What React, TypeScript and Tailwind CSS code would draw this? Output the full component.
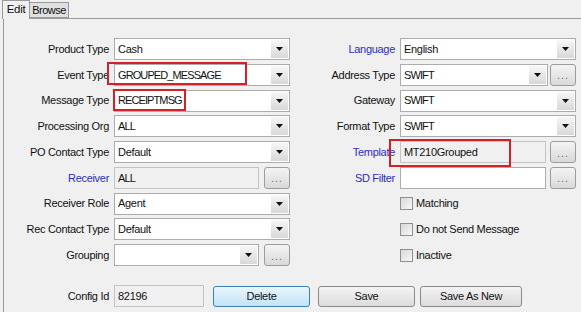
import React from 'react'

const font = { fontFamily: '"Liberation Sans", Arial, sans-serif' }

function Arrow() {
  return (
    <div className="flex h-full w-[17px] items-center justify-center bg-gradient-to-b from-[#f7f7f7] to-[#d8d8d8]">
      <svg width="7" height="4" viewBox="0 0 7 4">
        <path d="M0 0h7L3.5 4z" fill="#111" />
      </svg>
    </div>
  )
}

function Combo({ value, caps = false, className = '' }: { value: string; caps?: boolean; className?: string }) {
  return (
    <div className={`flex h-[22px] items-center border border-[#acacac] bg-white pl-[3px] pr-[1px] ${className}`}>
      <span className={`flex-1 truncate ${caps ? 'tracking-[-0.9px]' : ''}`}>{value}</span>
      <div className="h-[18px]">
        <Arrow />
      </div>
    </div>
  )
}

function ReadOnly({ value, caps = false, className = '' }: { value: string; caps?: boolean; className?: string }) {
  return (
    <div
      className={`flex h-[22px] items-center border border-[#c4c4c4] bg-[#f0f0f0] pl-[3px] ${caps ? 'tracking-[-0.9px]' : ''} ${className}`}
    >
      {value}
    </div>
  )
}

function Dots() {
  return (
    <div className="flex h-[22px] w-[26px] items-center justify-center rounded-[3px] border border-[#9c9c9c] bg-gradient-to-b from-[#f4f4f4] to-[#d9d9d9] pt-[2px] text-[10px] tracking-[1px] text-[#666]">
      ...
    </div>
  )
}

function Label({ text, blue = false }: { text: string; blue?: boolean }) {
  return (
    <div className={`flex h-[22px] items-center justify-end pr-[5px] ${blue ? 'text-[#2d2dc0]' : 'text-[#111]'}`}>
      {text}
    </div>
  )
}

function Check({ text }: { text: string }) {
  return (
    <div className="flex h-[22px] items-center gap-[3px]">
      <div className="h-[13px] w-[13px] border border-[#8e8f8f] bg-gradient-to-br from-[#d8d8d8] to-[#f8f8f8]" />
      <span>{text}</span>
    </div>
  )
}

function Btn({ text, active = false, className = '' }: { text: string; active?: boolean; className?: string }) {
  return (
    <div
      className={`flex h-[21px] items-center justify-center rounded-[3px] border ${
        active
          ? 'border-[#3c7fb1] bg-gradient-to-b from-[#eaf6fd] to-[#bfe4f8]'
          : 'border-[#8a8a8a] bg-gradient-to-b from-[#f4f4f4] to-[#dcdcdc]'
      } ${className}`}
    >
      {text}
    </div>
  )
}

export default function App() {
  return (
    <div
      className="relative h-[312px] w-[581px] overflow-hidden bg-[#f0f0f0] text-[11px] tracking-[-0.3px] text-[#111]"
      style={font}
    >
      {/* Tabs */}
      <div className="flex h-[19px] items-end pl-[2px]">
        <div className="relative z-10 flex h-[19px] w-[28px] items-center justify-center border border-b-0 border-[#9a9a9a] bg-[#f0f0f0] text-[11.5px]">
          Edit
        </div>
        <div className="mb-[1px] flex h-[16px] w-[39px] items-center justify-center border border-l-0 border-[#9a9a9a] bg-[#e0e0e0] text-[11px] tracking-[-0.5px]">
          Browse
        </div>
      </div>

      {/* Panel */}
      <div className="-mt-[1px] ml-[3px] h-full border-l border-t border-[#9a9a9a] pt-[19px]">
        <div className="grid grid-cols-[110px_176px_110px_176px] gap-y-[3.75px]">
          <Label text="Product Type" />
          <Combo value="Cash" />
          <Label text="Language" blue />
          <Combo value="English" />

          <Label text="Event Type" />
          <Combo value="GROUPED_MESSAGE" caps />
          <Label text="Address Type" />
          <div className="flex gap-[2px]">
            <Combo value="SWIFT" caps className="flex-1" />
            <Dots />
          </div>

          <Label text="Message Type" />
          <Combo value="RECEIPTMSG" caps />
          <Label text="Gateway" />
          <Combo value="SWIFT" caps />

          <Label text="Processing Org" />
          <Combo value="ALL" caps />
          <Label text="Format Type" />
          <Combo value="SWIFT" caps />

          <Label text="PO Contact Type" />
          <Combo value="Default" />
          <Label text="Template" blue />
          <div className="flex gap-[4px]">
            <ReadOnly value="MT210Grouped" className="flex-1" />
            <Dots />
          </div>

          <Label text="Receiver" blue />
          <div className="flex gap-[5px]">
            <ReadOnly value="ALL" caps className="flex-1" />
            <Dots />
          </div>
          <Label text="SD Filter" blue />
          <div className="flex gap-[4px]">
            <div className="h-[22px] flex-1 border border-[#acacac] bg-white" />
            <Dots />
          </div>

          <Label text="Receiver Role" />
          <Combo value="Agent" />
          <div />
          <Check text="Matching" />

          <Label text="Rec Contact Type" />
          <Combo value="Default" />
          <div />
          <Check text="Do not Send Message" />

          <Label text="Grouping" />
          <div className="flex gap-[5px]">
            <Combo value="" className="flex-1" />
            <Dots />
          </div>
          <div />
          <Check text="Inactive" />
        </div>

        {/* Footer row */}
        <div className="mt-[19px] flex items-center">
          <div className="w-[110px]">
            <Label text="Config Id" />
          </div>
          <ReadOnly value="82196" className="w-[90px]" />
          <Btn text="Delete" active className="ml-[9px] w-[97px]" />
          <Btn text="Save" className="ml-[8px] w-[97px]" />
          <Btn text="Save As New" className="ml-[5px] w-[102px]" />
        </div>
      </div>

      {/* Red annotation boxes */}
      <div className="pointer-events-none absolute left-[107px] top-[62px] h-[23px] w-[140px] border-2 border-[#d42027]" />
      <div className="pointer-events-none absolute left-[113px] top-[89px] h-[22px] w-[73px] border-2 border-[#d42027]" />
      <div className="pointer-events-none absolute left-[389px] top-[139px] h-[28px] w-[122px] border-2 border-[#d42027]" />
    </div>
  )
}
